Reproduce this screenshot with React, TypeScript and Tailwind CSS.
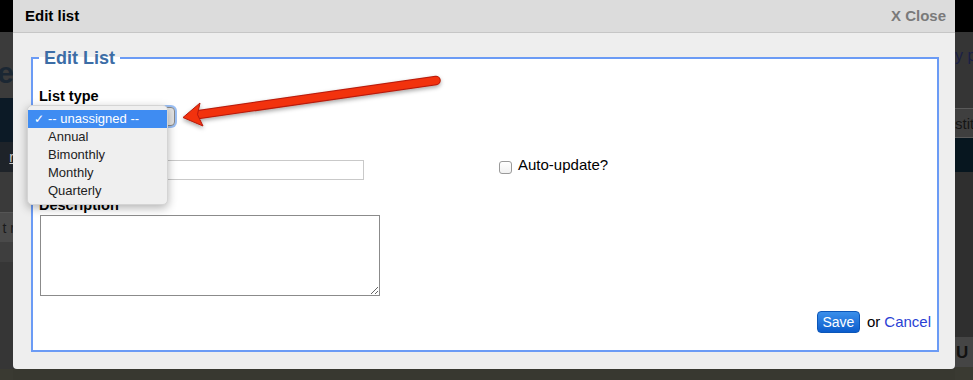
import React from "react";

function Arrow() {
  return (
    <svg className="absolute left-0 top-0 pointer-events-none" width="973" height="380" viewBox="0 0 973 380">
      <defs>
        <filter id="sh" x="-10%" y="-50%" width="120%" height="200%">
          <feDropShadow dx="0" dy="2" stdDeviation="2" floodColor="#000" floodOpacity="0.35" />
        </filter>
      </defs>
      <g filter="url(#sh)">
        <line x1="198" y1="114.6" x2="436" y2="80.5" stroke="#b51a08" strokeWidth="9.5" strokeLinecap="round" />
        <line x1="198" y1="114.6" x2="436" y2="80.5" stroke="#f2300f" strokeWidth="7.5" strokeLinecap="round" />
        <polygon points="183,117.5 200,103 197.5,114.6 203,126" fill="#f2300f" stroke="#b51a08" strokeWidth="1" strokeLinejoin="round" />
      </g>
    </svg>
  );
}

export default function App() {
  const font = "font-['Liberation_Sans',Arial,sans-serif]";
  return (
    <div className={`relative w-[973px] h-[380px] overflow-hidden bg-[#333] ${font}`}>
      <div className="flex h-full">
        {/* left background strip */}
        <div className="w-[13px] flex flex-col overflow-hidden shrink-0">
          <div className="h-[32px] bg-black" />
          <div className="h-[66px] bg-[#3b3b3b] flex items-end justify-end overflow-hidden">
            <span className="text-[30px] font-bold text-[#1b2733] leading-[30px] mb-[10px] -mr-[1px]">e</span>
          </div>
          <div className="h-[44px] bg-[#0c1a26]" />
          <div className="h-[30px] bg-[#1e2329] flex items-center justify-end overflow-hidden">
            <span className="text-[14px] text-[#c8c8c8] underline leading-[14px] -mr-[1px]">r</span>
          </div>
          <div className="h-[40px] bg-[#3a3a3a]" />
          <div className="h-[30px] bg-[#4a4a4a] border-t border-[#555] flex items-center justify-end overflow-hidden">
            <span className="text-[14px] text-[#1a1a1a] leading-[14px] whitespace-nowrap -mr-[2px]">t r</span>
          </div>
          <div className="h-[20px] bg-[#3e3e3e]" />
          <div className="flex-1 bg-[#363636]" />
          <div className="h-[11px] bg-[#3a3a32]" />
        </div>

        {/* middle column: modal + bottom strip */}
        <div className="w-[942px] flex flex-col shrink-0">
          <div className="h-[369px] bg-[#eeeeee] rounded-b-[4px] flex flex-col">
            <div className="h-[33px] bg-[#dcdcdc] border-b border-[#c6c6c6] flex items-center justify-between pl-[12px] pr-[9px]">
              <span className="text-[15px] font-bold text-black">Edit list</span>
              <span className="text-[15px] font-bold text-[#7a7a7a]">X Close</span>
            </div>
            <div className="pt-[15px] pl-[18px] pr-[16px]">
              <fieldset className="border-2 border-[#6b9bf5] bg-white px-[6px] pb-[17px] h-[304px]">
                <legend className="px-[5px] text-[18px] leading-[20px] font-bold text-[#3c6da6]">Edit List</legend>
                <div className="mt-[20px] text-[14.5px] leading-[16px] font-bold text-black">List type</div>
                <div className="mt-[3px] w-[138px] h-[19px] -ml-[2px] rounded-[4px] border border-[#8a8a8a] bg-[#e4e4e4] shadow-[0_0_0_2px_#9cc0f5]" />
                <div className="grid grid-cols-[460px_1fr]">
                  <div>
                    <div className="mt-[12px] h-[16px]" />
                    <div className="mt-[6px] w-[325px] h-[20px] border border-[#c9c9c9] bg-white" />
                  </div>
                  <div className="self-end mb-[3px] flex items-center h-[20px]">
                    <div className="w-[13px] h-[13px] rounded-[3px] border border-[#9a9a9a] bg-gradient-to-b from-white to-[#f1f1f1]" />
                    <span className="ml-[6px] text-[15px] leading-[16px] text-black -mt-[4px]">Auto-update?</span>
                  </div>
                </div>
                <div className="mt-[17px] text-[14.5px] leading-[16px] font-bold text-black">Description</div>
                <textarea
                  readOnly
                  className="mt-[2px] block w-[340px] h-[81px] ml-[1px] border border-[#8b8b8b] bg-white resize outline-none"
                />
                <div className="mt-[15px] flex items-center justify-end">
                  <div className="w-[43px] h-[22px] rounded-[4px] bg-gradient-to-b from-[#3a8fea] to-[#0a5ccc] border border-[#0b56b8] flex items-center justify-center text-white text-[14px]">
                    Save
                  </div>
                  <span className="ml-[7px] text-[15px] text-black">or</span>
                  <span className="ml-[4px] text-[15px] text-[#2a3fd4]">Cancel</span>
                </div>
              </fieldset>
            </div>
          </div>
          <div className="flex-1 bg-[#383830]" />
        </div>

        {/* right background strip */}
        <div className="flex-1 flex flex-col overflow-hidden">
          <div className="h-[32px] bg-black" />
          <div className="h-[76px] bg-[#353535] flex items-start overflow-hidden">
            <span className="mt-[16px] text-[16px] leading-[16px] text-[#1a1f45] whitespace-nowrap">y pr</span>
          </div>
          <div className="h-[30px] bg-[#3f3f3f] border-t border-b border-[#5a5a5a] flex items-center overflow-hidden">
            <span className="text-[15px] leading-[15px] text-[#151515] whitespace-nowrap">stit</span>
          </div>
          <div className="h-[34px] bg-[#07161f]" />
          <div className="flex-1 bg-[#2f2f2f]" />
          <div className="h-[30px] bg-[#454545] flex items-center overflow-hidden">
            <span className="ml-[1px] text-[17px] font-bold text-[#111] leading-[17px]">U</span>
          </div>
          <div className="h-[13px] bg-[#3a3a32]" />
        </div>
      </div>

      {/* open select menu */}
      <div className="absolute left-[27px] top-[105px] w-[141px] py-[4px] rounded-[5px] bg-[#efefef] shadow-[0_3px_10px_rgba(0,0,0,0.3)] border border-[#d4d4d4] text-[13px]">
        <div className="h-[18px] bg-[#3f8cf2] text-white flex items-center">
          <span className="w-[20px] pl-[6px] text-[12px]">✓</span>
          <span>-- unassigned --</span>
        </div>
        {["Annual", "Bimonthly", "Monthly", "Quarterly"].map((t) => (
          <div key={t} className="h-[18px] flex items-center pl-[20px] text-[#222]">
            {t}
          </div>
        ))}
      </div>

      <Arrow />
    </div>
  );
}
